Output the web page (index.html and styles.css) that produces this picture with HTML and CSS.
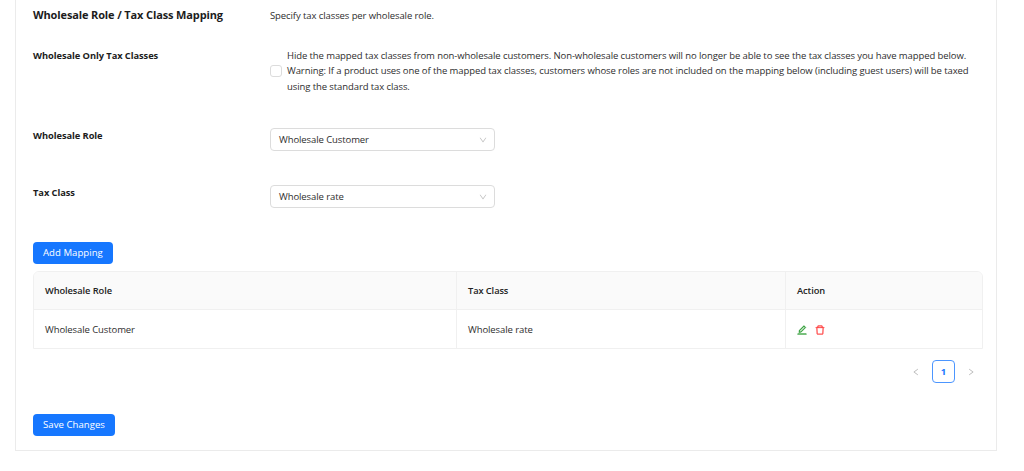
FILE: index.html
```html
<!DOCTYPE html>
<html lang="en">
<head>
    <meta charset="UTF-8">
    <meta name="viewport" content="width=device-width, initial-scale=1.0">
    <title>Wholesale Tax Settings</title>
    <link rel="stylesheet" href="styles.css">
</head>
<body>
    <div class="panel">
        <div class="form-row heading-row">
            <h2 class="section-title">Wholesale Role / Tax Class Mapping</h2>
            <p class="description">Specify tax classes per wholesale role.</p>
        </div>

        <div class="form-row checkbox-row">
            <div class="label">Wholesale Only Tax Classes</div>
            <label class="checkbox">
                <input type="checkbox" class="checkbox-input">
                <span>Hide the mapped tax classes from non-wholesale customers. Non-wholesale customers will no longer be able to see the tax classes you have mapped below.<br>Warning: If a product uses one of the mapped tax classes, customers whose roles are not included on the mapping below (including guest users) will be taxed<br>using the standard tax class.</span>
            </label>
        </div>

        <div class="form-row select-row">
            <div class="label">Wholesale Role</div>
            <div class="select">
                <span>Wholesale Customer</span>
                <svg class="arrow" viewBox="64 64 896 896"><path d="M884 256h-75c-5.100 0-9.900 2.500-12.900 6.600L512 654.200 227.900 262.600c-3-4.100-7.800-6.600-12.900-6.600h-75c-6.500 0-10.300 7.400-6.500 12.700l352.600 486.100c12.800 17.600 39 17.600 51.700 0l352.600-486.100c3.900-5.300.1-12.700-6.400-12.700z"/></svg>
            </div>
        </div>

        <div class="form-row select-row">
            <div class="label">Tax Class</div>
            <div class="select">
                <span>Wholesale rate</span>
                <svg class="arrow" viewBox="64 64 896 896"><path d="M884 256h-75c-5.100 0-9.900 2.500-12.900 6.600L512 654.200 227.900 262.600c-3-4.100-7.800-6.600-12.900-6.600h-75c-6.500 0-10.300 7.400-6.500 12.700l352.600 486.100c12.800 17.600 39 17.600 51.700 0l352.600-486.100c3.900-5.300.1-12.700-6.400-12.700z"/></svg>
            </div>
        </div>

        <button class="button">Add Mapping</button>

        <table class="mapping-table">
            <colgroup>
                <col class="col-role">
                <col class="col-class">
                <col>
            </colgroup>
            <thead>
                <tr>
                    <th>Wholesale Role</th>
                    <th>Tax Class</th>
                    <th>Action</th>
                </tr>
            </thead>
            <tbody>
                <tr>
                    <td>Wholesale Customer</td>
                    <td>Wholesale rate</td>
                    <td>
                        <div class="actions">
                            <svg class="icon edit" viewBox="64 64 896 896"><path fill-rule="evenodd" d="M880 836H144c-17.700 0-32 14.300-32 32v36c0 4.400 3.600 8 8 8h784c4.400 0 8-3.600 8-8v-36c0-17.700-14.300-32-32-32zM257.700 752c2 0 4-.2 6-.5L431.900 722c2-.4 3.900-1.300 5.300-2.800l423.900-423.900a9.960 9.960 0 0 0 0-14.100L694.900 114.900c-1.900-1.900-4.400-2.900-7.100-2.900s-5.200 1-7.100 2.900L256.800 538.800c-1.500 1.500-2.400 3.300-2.800 5.300l-29.500 168.200a33.500 33.500 0 0 0 9.400 29.800c6.600 6.400 14.900 9.900 23.800 9.900zm67.400-174.400L687.800 215l73.300 73.300-362.700 362.600-88.900 15.700 15.600-89z"/></svg>
                            <svg class="icon delete" viewBox="64 64 896 896"><path fill-rule="evenodd" d="M360 184h-8c4.400 0 8-3.600 8-8v8h304v-8c0 4.400 3.600 8 8 8h-8v72h72v-80c0-35.300-28.700-64-64-64H352c-35.300 0-64 28.700-64 64v80h72v-72zM864 256H160c-17.700 0-32 14.300-32 32v32c0 4.400 3.600 8 8 8h60.400l24.700 523c1.600 34.100 29.800 61 63.900 61h454c34.200 0 62.300-26.800 63.900-61l24.700-523H888c4.400 0 8-3.600 8-8v-32c0-17.700-14.300-32-32-32zM731.300 840H292.700l-24.200-512h487l-24.200 512z"/></svg>
                        </div>
                    </td>
                </tr>
            </tbody>
        </table>

        <div class="pagination">
            <svg class="page-arrow" viewBox="64 64 896 896"><path d="M724 218.300V141c0-6.700-7.700-10.400-12.900-6.300L260.300 486.800a31.860 31.860 0 0 0 0 50.300l450.800 352.100c5.300 4.100 12.900.4 12.900-6.300v-77.300c0-4.900-2.300-9.600-6.100-12.600l-360-281 360-281.100c3.800-3 6.100-7.700 6.100-12.600z"/></svg>
            <span class="page-current">1</span>
            <svg class="page-arrow" viewBox="64 64 896 896"><path d="M765.700 486.800L314.900 134.700A7.970 7.970 0 0 0 302 141v77.300c0 4.900 2.300 9.600 6.100 12.600l360 281.100-360 281.100c-3.900 3-6.100 7.700-6.100 12.600V883c0 6.700 7.700 10.400 12.900 6.300l450.800-352.100a31.960 31.960 0 0 0 0-50.400z"/></svg>
        </div>

        <button class="button">Save Changes</button>
    </div>
</body>
</html>
```
FILE: styles.css
```css
* {
    box-sizing: border-box;
}

body {
    margin: 0;
    background-color: #fff;
    font-family: "Segoe UI", "Open Sans", sans-serif;
    font-size: 9.5px;
    letter-spacing: -0.09px;
    line-height: 15.4px;
    color: #2e2e2e;
}

.panel {
    width: 982px;
    height: 451px;
    margin-left: 15px;
    padding: 0 14px 0 17px;
    border: 1px solid #ebebeb;
    border-top: none;
}

/* Form */
.form-row {
    display: grid;
    grid-template-columns: 237px 1fr;
    align-items: start;
}

.heading-row {
    height: 48px;
    padding-top: 7px;
}

.section-title {
    margin: 0;
    font-size: 11px;
    font-weight: 700;
    letter-spacing: -0.13px;
    color: #1c1c1c;
    white-space: nowrap;
}

.description {
    margin: 1px 0 0;
}

.checkbox-row {
    height: 80px;
}

.label {
    font-size: 9.3px;
    font-weight: 700;
    letter-spacing: -0.06px;
    color: #1c1c1c;
}

.checkbox {
    display: flex;
    align-items: center;
    gap: 5px;
    white-space: nowrap;
}

.checkbox-input {
    appearance: none;
    flex: none;
    width: 12px;
    height: 12px;
    margin: 0;
    border: 1px solid #dcdcdc;
    border-radius: 3px;
}

.select-row {
    height: 57px;
}

.select {
    display: flex;
    justify-content: space-between;
    align-items: center;
    width: 225px;
    height: 23px;
    padding: 0 7px 0 8px;
    border: 1px solid #dcdcdc;
    border-radius: 4px;
}

.arrow {
    width: 8px;
    height: 8px;
    fill: #bfbfbf;
}

.button {
    display: block;
    height: 22px;
    padding: 0 10px;
    border: none;
    border-radius: 4px;
    background-color: #1677ff;
    color: #fff;
    font: inherit;
    font-size: 9.6px;
    letter-spacing: 0.03px;
    cursor: pointer;
}

/* Table */
.mapping-table {
    width: 950px;
    margin-top: 7px;
    border: 1px solid #f0f0f0;
    border-radius: 6px 6px 0 0;
    border-spacing: 0;
    table-layout: fixed;
    overflow: hidden;
}

.col-role {
    width: 423px;
}

.col-class {
    width: 329px;
}

.mapping-table th,
.mapping-table td {
    height: 38px;
    padding: 0 11px;
    border-right: 1px solid #f0f0f0;
    text-align: left;
}

.mapping-table td {
    padding-top: 1px;
}

.mapping-table th:last-child,
.mapping-table td:last-child {
    border-right: none;
}

.mapping-table th {
    background-color: #fafafa;
    border-bottom: 1px solid #f0f0f0;
    font-size: 9.3px;
    font-weight: 600;
    color: #222;
}

.actions {
    display: flex;
    gap: 8px;
}

.icon {
    width: 10px;
    height: 10px;
    stroke-width: 25px;
}

.edit {
    fill: #2e9e35;
    stroke: #2e9e35;
}

.delete {
    fill: #ff3b3b;
    stroke: #ff3b3b;
}

.pagination {
    display: flex;
    justify-content: flex-end;
    align-items: center;
    gap: 12px;
    height: 23px;
    margin: 11px 7px 31px 0;
}

.page-arrow {
    width: 8px;
    height: 8px;
    fill: #b0b0b0;
}

.page-current {
    width: 23px;
    height: 23px;
    border: 1px solid #4c96ff;
    border-radius: 4px;
    color: #1677ff;
    font-weight: 700;
    line-height: 21px;
    text-align: center;
}
```
